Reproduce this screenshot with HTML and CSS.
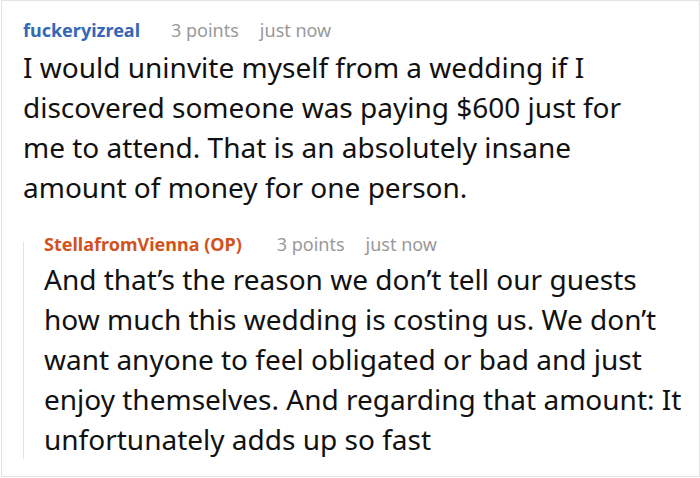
FILE: index.html
```html
<!DOCTYPE html>
<html>
<head>
<meta charset="utf-8">
<link rel="stylesheet" href="styles.css">
</head>
<body>
<div class="frame">
  <div class="comment">
    <div class="meta">
      <span class="author">fuckeryizreal</span>
      <span class="info">3 points</span>
      <span class="info">just now</span>
    </div>
    <p class="body">I would uninvite myself from a wedding if I discovered someone was paying $600 just for me to attend. That is an absolutely insane amount of money for one person.</p>
    <div class="reply">
      <div class="meta">
        <span class="author op">StellafromVienna (OP)</span>
        <span class="info">3 points</span>
        <span class="info">just now</span>
      </div>
      <p class="body">And that’s the reason we don’t tell our guests how much this wedding is costing us. We don’t want anyone to feel obligated or bad and just enjoy themselves. And regarding that amount: It unfortunately adds up so fast</p>
    </div>
  </div>
</div>
</body>
</html>
```
FILE: styles.css
```css
html, body {
  margin: 0;
  padding: 0;
  background: #fff;
}
body {
  font-family: "Noto Sans", "DejaVu Sans", sans-serif;
  color: #111;
}
.frame {
  margin-left: 1px;
  width: 699px;
  height: 477px;
  box-sizing: border-box;
  border: 1px solid #e3e3e3;
  overflow: hidden;
}
.comment {
  padding: 14px 0 0 21px;
}
.meta {
  display: flex;
  align-items: baseline;
  font-size: 18px;
  line-height: 30px;
  white-space: nowrap;
}
.author {
  font-weight: 700;
  color: #3567b5;
  margin-right: 31px;
}
.author.op {
  color: #d2521d;
  margin-right: 35px;
}
.info {
  color: #999;
  margin-right: 21px;
}
.body {
  margin: 2px 0 0;
  font-size: 28px;
  line-height: 40px;
  padding-right: 40px;
}
.reply {
  display: flex;
  flex-direction: column;
  margin-top: 35px;
  border-left: 1px solid #e4e4e4;
  padding-left: 20px;
}
.reply .meta {
  margin-top: -13px;
}
.reply .body {
  margin: 0;
  padding-right: 0;
}
```
